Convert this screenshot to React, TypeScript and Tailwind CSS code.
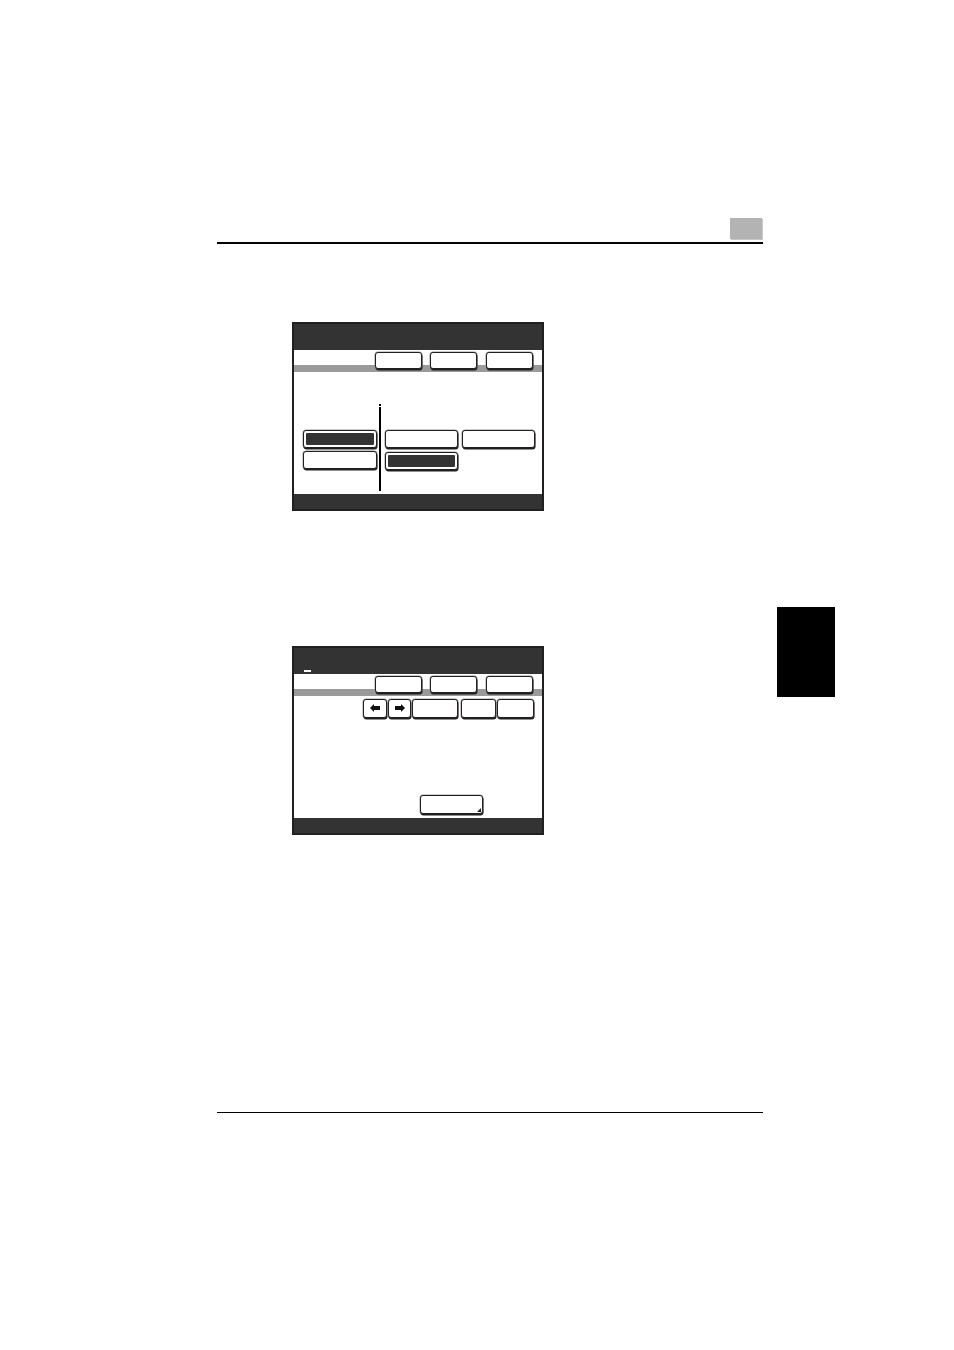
import React from "react";

const Btn = ({ w, h = 18, dark = false, corner = false, children }: { w: number; h?: number; dark?: boolean; corner?: boolean; children?: React.ReactNode }) => (
  <div
    className="relative shrink-0 rounded-[3px] border border-[#231f20] bg-white p-[2px] shadow-[0.5px_1.5px_0_#231f20,0_0_0_0.5px_#9a9a9a] flex items-center justify-center"
    style={{ width: w, height: h }}
  >
    {dark && <div className="h-full w-full rounded-[1px] bg-[#333333]" />}
    {children}
    {corner && (
      <svg className="absolute bottom-[1px] right-[1px]" width="4" height="4" viewBox="0 0 4 4">
        <polygon points="4,0 4,4 0,4" fill="#231f20" />
      </svg>
    )}
  </div>
);

const TabsRow = () => (
  <div className="flex h-[22px] shrink-0 items-start justify-end border-b-[7px] border-[#9a9a9a] bg-white pr-[9px] pt-[2px]">
    <Btn w={47} h={17} />
    <div className="w-[8px]" />
    <Btn w={47} h={17} />
    <div className="w-[9px]" />
    <Btn w={47} h={17} />
  </div>
);

const Screen = ({ header, children }: { header?: React.ReactNode; children: React.ReactNode }) => (
  <div className="flex h-[189px] w-[252px] flex-col border-2 border-[#231f20] bg-white">
    <div className="flex h-[26px] shrink-0 items-end bg-[#333333] pb-[2px] pl-[10px]">{header}</div>
    <TabsRow />
    <div className="h-[122px] shrink-0">{children}</div>
    <div className="h-[15px] shrink-0 bg-[#333333]" />
  </div>
);

const Arrow = ({ dir }: { dir: "l" | "r" }) => (
  <svg width="10" height="8" viewBox="0 0 10 8" style={{ transform: dir === "r" ? "scaleX(-1)" : undefined }}>
    <polygon points="0,4 4,0 4,2 10,2 10,6 4,6 4,8" fill="#111" />
  </svg>
);

export default function App() {
  return (
    <div className="flex h-[1350px] w-[954px] overflow-hidden bg-white" style={{ fontFamily: '"Liberation Sans", Arial, sans-serif' }}>
      <div className="w-[777px] shrink-0 pl-[217px] pt-[218px]">
        <div className="flex w-[546px] justify-end">
          <div className="mr-[1px] h-[21px] w-[32px] bg-[#b3b3b3] shadow-[1px_1px_0_#c8c8c8]" />
        </div>
        <div className="mt-[3px] h-[1.5px] w-[546px] bg-black" />

        <div className="ml-[75px] mt-[78px]">
          <Screen>
            <div className="flex h-full pl-[9px]">
              <div className="flex w-[74px] flex-col gap-[3px] pt-[58px]">
                <Btn w={74} dark />
                <Btn w={74} />
              </div>
              <div className="ml-[2px] flex flex-col items-center pt-[32px]">
                <div className="h-[2px] w-[2px] bg-black" />
                <div className="mt-[1px] h-[84px] w-[1.5px] bg-black" />
              </div>
              <div className="ml-[4px] grid grid-cols-[73px_73px] gap-x-[4px] gap-y-[4px] self-start pt-[58px]">
                <Btn w={73} />
                <Btn w={73} />
                <Btn w={73} dark />
              </div>
            </div>
          </Screen>
        </div>

        <div className="ml-[75px] mt-[135px]">
          <Screen header={<div className="h-[1.5px] w-[7px] bg-white" />}>
            <div className="flex h-full flex-col">
              <div className="flex justify-end gap-[1px] pr-[8px] pt-[3px]">
                <Btn w={24} h={19}>
                  <Arrow dir="l" />
                </Btn>
                <Btn w={23} h={19}>
                  <Arrow dir="r" />
                </Btn>
                <Btn w={46} h={19} />
                <div className="w-[1px]" />
                <Btn w={35} h={19} />
                <Btn w={37} h={19} />
              </div>
              <div className="ml-[126px] mt-[77px]">
                <Btn w={63} h={19} corner />
              </div>
            </div>
          </Screen>
        </div>

        <div className="mt-[277px] h-[1.5px] w-[546px] bg-black" />
      </div>
      <div className="pt-[607px]">
        <div className="h-[90px] w-[58px] bg-black" />
      </div>
    </div>
  );
}
